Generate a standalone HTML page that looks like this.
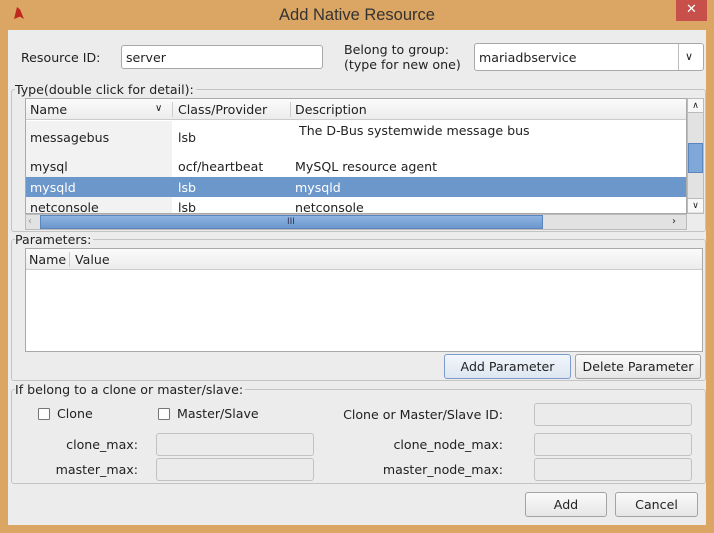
<!DOCTYPE html>
<html><head><style>
*{box-sizing:border-box;margin:0;padding:0}
body{width:714px;height:533px;background:#dba563;font-family:"DejaVu Sans","Liberation Sans",sans-serif;font-size:12.6px;color:#222;position:relative;overflow:hidden}
.a{position:absolute}
.t{position:absolute;white-space:nowrap;line-height:16px}
.in{position:absolute;background:#fff;border:1px solid #a9a9a9;border-radius:3px}
.dis{position:absolute;background:#ebebeb;border:1px solid #c2c2c2;border-radius:3px}
.grp{position:absolute;border:1px solid #c4c4c4;border-radius:3px}
.lg{position:absolute;background:#ececec;padding-right:2px;line-height:14px}
.btn{position:absolute;border:1px solid #a3a3a3;border-radius:3px;background:linear-gradient(#fafafa,#e6e6e6);text-align:center;line-height:24px}
.cb{position:absolute;width:12px;height:12px;border:1px solid #777;background:#fff;border-radius:1px}
</style></head><body>
<div class="a" style="left:14px;top:7px;width:10px;height:12px;background:#c0281e;clip-path:polygon(30% 0,60% 20%,100% 100%,60% 80%,0 100%)"></div>
<div class="t" style="left:0;width:714px;text-align:center;top:7px;font-size:16.5px;color:#333;font-family:'Liberation Sans',sans-serif">Add Native Resource</div>
<div class="a" style="left:676px;top:0;width:31px;height:21px;background:#c7504a;color:#fff;text-align:center;font-size:13px;line-height:20px">✕</div>
<div class="a" style="left:8px;top:30px;width:698px;height:495px;background:#ececec"></div>

<div class="t" style="left:21px;top:50px">Resource ID:</div>
<div class="in" style="left:121px;top:45px;width:202px;height:24px"></div>
<div class="t" style="left:126px;top:50px">server</div>
<div class="t" style="left:344px;top:42px">Belong to group:</div>
<div class="t" style="left:344px;top:57px">(type for new one)</div>
<div class="in" style="left:474px;top:43px;width:230px;height:28px"></div>
<div class="a" style="left:678px;top:44px;width:1px;height:26px;background:#bbb"></div>
<div class="t" style="left:479px;top:50px">mariadbservice</div>
<div class="t" style="left:685px;top:49px;font-size:11px">&#8744;</div>

<div class="grp" style="left:11px;top:89px;width:695px;height:143px"></div>
<div class="lg" style="left:15px;top:83px">Type(double click for detail):</div>
<div class="a" style="left:25px;top:98px;width:662px;height:116px;background:#fff;border:1px solid #aaa"></div>
<div class="a" style="left:26px;top:99px;width:660px;height:21px;background:linear-gradient(#fbfbfb,#ececec);border-bottom:1px solid #ccc"></div>
<div class="a" style="left:172px;top:102px;width:1px;height:15px;background:#ccc"></div>
<div class="a" style="left:290px;top:102px;width:1px;height:15px;background:#ccc"></div>
<div class="t" style="left:30px;top:102px">Name</div>
<div class="t" style="left:155px;top:101px;font-size:10px">&#8744;</div>
<div class="t" style="left:178px;top:102px">Class/Provider</div>
<div class="t" style="left:295px;top:102px">Description</div>
<div class="a" style="left:26px;top:121px;width:146px;height:56px;background:#f2f2f2"></div>
<div class="a" style="left:26px;top:197px;width:146px;height:16px;background:#f2f2f2"></div>
<div class="t" style="left:30px;top:130px">messagebus</div><div class="t" style="left:178px;top:130px">lsb</div><div class="t" style="left:299px;top:123px">The D-Bus systemwide message bus</div>
<div class="t" style="left:30px;top:159px">mysql</div><div class="t" style="left:178px;top:159px">ocf/heartbeat</div><div class="t" style="left:295px;top:159px">MySQL resource agent</div>
<div class="a" style="left:26px;top:177px;width:660px;height:20px;background:#6c97cb"></div>
<div class="t" style="left:30px;top:180px;color:#fff">mysqld</div><div class="t" style="left:178px;top:180px;color:#fff">lsb</div><div class="t" style="left:295px;top:180px;color:#fff">mysqld</div>
<div class="a" style="left:26px;top:197px;width:660px;height:16px;overflow:hidden"><div class="t" style="left:4px;top:3px">netconsole</div><div class="t" style="left:152px;top:3px">lsb</div><div class="t" style="left:269px;top:3px">netconsole</div></div>
<div class="a" style="left:687px;top:98px;width:17px;height:116px;background:#e2e2e2;border:1px solid #bbb"></div>
<div class="a" style="left:688px;top:99px;width:15px;height:14px;background:#f8f8f8;border-bottom:1px solid #bbb;font-size:9px;text-align:center;line-height:14px">&#8743;</div>
<div class="a" style="left:688px;top:143px;width:15px;height:30px;background:#7fa7d8;border:1px solid #5a85bd"></div>
<div class="a" style="left:688px;top:198px;width:15px;height:14px;background:#f8f8f8;border-top:1px solid #bbb;font-size:9px;text-align:center;line-height:14px">&#8744;</div>
<div class="a" style="left:25px;top:214px;width:662px;height:16px;background:#e2e2e2;border:1px solid #bbb"></div>
<div class="a" style="left:40px;top:215px;width:503px;height:14px;background:linear-gradient(#8fb4e2,#6c97cb);border:1px solid #5a85bd"></div>
<div class="t" style="left:287px;top:214px;font-size:9px;color:#335">III</div>
<div class="t" style="left:28px;top:214px;font-size:10px;color:#999">‹</div>
<div class="t" style="left:672px;top:214px;font-size:10px">›</div>

<div class="grp" style="left:11px;top:239px;width:695px;height:142px"></div>
<div class="lg" style="left:15px;top:233px">Parameters:</div>
<div class="a" style="left:25px;top:248px;width:678px;height:104px;background:#fff;border:1px solid #aaa"></div>
<div class="a" style="left:26px;top:249px;width:676px;height:21px;background:linear-gradient(#fbfbfb,#ececec);border-bottom:1px solid #ccc"></div>
<div class="a" style="left:69px;top:252px;width:1px;height:15px;background:#ccc"></div>
<div class="t" style="left:29px;top:252px">Name</div><div class="t" style="left:75px;top:252px">Value</div>
<div class="btn" style="left:444px;top:354px;width:127px;height:25px;border-color:#7b9ccb;background:linear-gradient(#f2f6fb,#dde6f1)">Add Parameter</div>
<div class="btn" style="left:575px;top:354px;width:126px;height:25px">Delete Parameter</div>

<div class="grp" style="left:11px;top:389px;width:695px;height:95px"></div>
<div class="lg" style="left:15px;top:383px">If belong to a clone or master/slave:</div>
<div class="cb" style="left:38px;top:408px"></div><div class="t" style="left:57px;top:406px">Clone</div>
<div class="cb" style="left:158px;top:408px"></div><div class="t" style="left:177px;top:406px">Master/Slave</div>
<div class="t" style="left:300px;width:203px;text-align:right;top:407px">Clone or Master/Slave ID:</div>
<div class="dis" style="left:534px;top:403px;width:158px;height:23px"></div>
<div class="t" style="left:0;width:138px;text-align:right;top:437px">clone_max:</div>
<div class="dis" style="left:156px;top:433px;width:158px;height:23px"></div>
<div class="t" style="left:0;width:138px;text-align:right;top:462px">master_max:</div>
<div class="dis" style="left:156px;top:458px;width:158px;height:23px"></div>
<div class="t" style="left:300px;width:203px;text-align:right;top:437px">clone_node_max:</div>
<div class="dis" style="left:534px;top:433px;width:158px;height:23px"></div>
<div class="t" style="left:300px;width:203px;text-align:right;top:462px">master_node_max:</div>
<div class="dis" style="left:534px;top:458px;width:158px;height:23px"></div>

<div class="btn" style="left:525px;top:492px;width:82px;height:25px">Add</div>
<div class="btn" style="left:615px;top:492px;width:83px;height:25px">Cancel</div>
</body></html>
